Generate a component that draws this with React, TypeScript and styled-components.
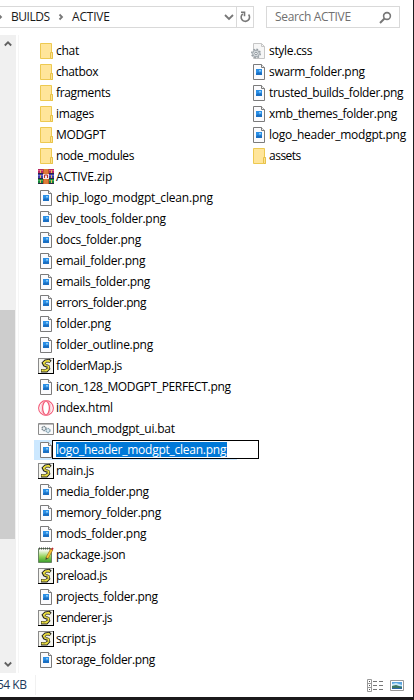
import React from "react";
import styled, { createGlobalStyle } from "styled-components";

const GlobalStyle = createGlobalStyle`
  * { box-sizing: border-box; }
  body { margin: 0; background: #fff; overflow: hidden; }
`;

const Window = styled.main`
  display: flex;
  flex-direction: column;
  width: 414px;
  height: 700px;
  background: #fff;
  border-right: 1px solid #1d1c1f;
  border-bottom: 3px solid #1b191b;
  font-family: "Open Sans", "Noto Sans", sans-serif;
  font-size: 12px;
  line-height: 20px;
  color: #000;
`;

const Toolbar = styled.header`
  display: flex;
  gap: 12px;
  height: 35px;
  padding-top: 6px;
`;

const AddressBar = styled.div`
  display: flex;
  width: 254px;
  height: 22px;
  border: 1px solid #d9d9d9;
  border-left: 0;
  color: #1a1a1a;
`;

const Crumbs = styled.div`
  display: flex;
  flex: 1;
  align-items: center;
`;

const Crumb = styled.span<{ $width: number; $track: number }>`
  width: ${(p) => p.$width}px;
  letter-spacing: ${(p) => p.$track}px;
  white-space: nowrap;
`;

const BarButton = styled.span<{ $width: number; $divided?: boolean }>`
  display: flex;
  align-items: center;
  justify-content: center;
  width: ${(p) => p.$width}px;
  border-left: ${(p) => (p.$divided ? "1px solid #d9d9d9" : "0")};
`;

const SearchBox = styled.div`
  display: flex;
  align-items: center;
  justify-content: space-between;
  width: 134px;
  height: 22px;
  padding: 0 7px 0 8px;
  border: 1px solid #d9d9d9;
  color: #707070;
  letter-spacing: -0.33px;
`;

const Body = styled.div`
  display: flex;
  height: 638px;
`;

const Scrollbar = styled.aside`
  display: flex;
  flex-direction: column;
  width: 16px;
  background: #f0f0f0;
`;

const ScrollArrow = styled.span`
  display: flex;
  align-items: center;
  justify-content: center;
  width: 15px;
  height: 18px;
  &:last-child { margin-top: auto; }
`;

const Thumb = styled.div`
  width: 15px;
  height: 229px;
  margin-top: 257px;
  background: #cdcdcd;
`;

const Files = styled.section`
  display: flex;
  margin-left: 2px;
  padding-top: 5px;
  border-left: 1px solid #f5f5f5;
`;

const Column = styled.ul<{ $width: number; $indent: number }>`
  width: ${(p) => p.$width}px;
  margin: 0;
  padding: 0 0 0 ${(p) => p.$indent}px;
  list-style: none;
`;

const Row = styled.li`
  display: flex;
  align-items: flex-start;
  gap: 2px;
  height: 21px;
  padding: 3px 0 0 4px;
`;

const SelectedRow = styled(Row)`
  gap: 0;
  width: 203px;
  height: 20px;
  margin-top: 1px;
  padding-top: 0;
  background: #cce8ff;
`;

const Name = styled.span<{ $track: number }>`
  margin-top: -2px;
  white-space: nowrap;
  letter-spacing: ${(p) => p.$track}px;
`;

const IconSlot = styled.span<{ $drop?: number }>`
  display: flex;
  flex: none;
  width: 16px;
  height: 16px;
  margin-top: ${(p) => p.$drop ?? 0}px;
`;

const RenameBox = styled.span`
  flex: none;
  width: 207px;
  height: 19px;
  margin-left: -2px;
  padding: 1px 3px;
  border: 1px solid #000;
  background: #fff;
`;

const Highlight = styled.span<{ $track: number }>`
  display: block;
  width: 171px;
  height: 15px;
  background: #0078d7;
  color: #fff;
  line-height: 16px;
  white-space: nowrap;
  letter-spacing: ${(p) => p.$track}px;
`;

const StatusBar = styled.footer`
  display: flex;
  align-items: center;
  justify-content: space-between;
  height: 24px;
  padding-right: 9px;
  color: #1e395b;
`;

const Size = styled.span`
  width: 36px;
  height: 20px;
  border-right: 1px solid #f1f1f1;
  line-height: 20px;
  white-space: nowrap;
  letter-spacing: -0.5px;
  text-indent: -3px;
`;

const Views = styled.div`
  display: flex;
  align-items: center;
  gap: 7px;
`;

type Kind = "folder" | "png" | "js" | "zip" | "html" | "bat" | "json" | "css";

const FolderIcon = () => (
  <svg width="16" height="16" viewBox="0 0 16 16">
    <path d="M2.5.5h11v9h1v6h-12z" fill="#ffe59a" stroke="#edc951" />
    <path d="M12.5 15V9.5h2v6h-2" fill="#ffe391" stroke="#e7c24a" />
  </svg>
);

const PngIcon = () => (
  <svg width="16" height="16" viewBox="0 0 16 16">
    <path d="M2.5.5h8l3 3v12h-11z" fill="#fbfbfd" stroke="#7b7b7b" />
    <path d="M10.5.5v3h3" fill="#eee" stroke="#7b7b7b" />
    <path d="M5 5h6v6H5z" fill="#2b8fe6" />
    <path d="M5 11V9.5L7 8l1.5 1L10 8l1 1v2z" fill="#1b6fc2" />
    <path d="M8 6h2v1.5H8z" fill="#8bcdf8" />
  </svg>
);

const JsIcon = () => (
  <svg width="16" height="16" viewBox="0 0 16 16">
    <path d="M0 0h16v16H0z" fill="#8a8a8a" />
    <path d="M1 1h14v14H1z" fill="#f5f5ef" />
    <path d="M15 0h1v16H0v-1h15z" fill="#000" />
    <path d="M12.5 4L11 2.5 7.5 3 5.5 5l1 2 3.5 1.5.5 2-2 2.2H3" fill="none" stroke="#222" strokeWidth="3.4" />
    <path d="M12 3.8L10.5 2.8 7.5 3.3 5.8 5l1 1.7 3.5 1.6.2 2.2-2 2H3.5" fill="none" stroke="#f1e43c" strokeWidth="1.8" />
    <path d="M8 4h3M6 6h2M8 8h2M8.5 10.5h2M5 12h2" stroke="#666" strokeWidth=".6" />
  </svg>
);

const ZipIcon = () => (
  <svg width="16" height="16" viewBox="0 0 16 16">
    <path d="M0 0h16v5H0z" fill="#b92861" />
    <path d="M0 1h16v1H0z" fill="#df5b8b" />
    <path d="M0 5h16v5H0z" fill="#3c3da5" />
    <path d="M0 6h16v1H0z" fill="#6669cd" />
    <path d="M0 10h16v5H0z" fill="#15843a" />
    <path d="M0 11h16v1H0z" fill="#42ad5b" />
    <path d="M0 4h16v1H0zM0 9h16v1H0zM0 14h16v1H0z" fill="#292344" />
    <path d="M2 1h1v3H2zM2 6h1v3H2zM2 11h1v3H2zM13 1h1v3h-1zM13 6h1v3h-1zM13 11h1v3h-1z" fill="#e4b85a" />
    <path d="M5 0h6v15H5z" fill="#b9572c" />
    <path d="M6 0h4v15H6z" fill="#de7c37" />
    <path d="M5 5h6v5H5z" fill="#f4e9e2" />
    <path d="M6.5 9V6h3v3" fill="none" stroke="#b92e2d" />
  </svg>
);

const HtmlIcon = () => (
  <svg width="16" height="16" viewBox="0 0 16 16" fill="none" stroke="#f35b78">
    <circle cx="8" cy="8" r="7.4" strokeWidth="1.1" />
    <ellipse cx="8" cy="8" rx="3.4" ry="6.9" strokeWidth="1.3" />
    <ellipse cx="8" cy="8" rx="5" ry="7.2" strokeWidth=".7" stroke="#f7a1b0" />
  </svg>
);

const BatIcon = () => (
  <svg width="16" height="16" viewBox="0 0 16 16">
    <path d="M.5 2.5h15v11H.5z" fill="#fafafa" stroke="#8b8b8b" />
    <path d="M1 3.5h14" stroke="#b9b9b9" />
    <circle cx="6" cy="7.5" r="2" fill="#e9eef1" stroke="#78868e" strokeWidth="1.3" strokeDasharray="1.5 .5" />
    <circle cx="10" cy="9.5" r="2" fill="#dcecf4" stroke="#8ba6b4" strokeWidth="1.3" strokeDasharray="1.5 .5" />
  </svg>
);

const JsonIcon = () => (
  <svg width="16" height="16" viewBox="0 0 16 16">
    <defs>
      <linearGradient id="pad" x2="0" y2="1">
        <stop offset=".15" stopColor="#f1f7e9" />
        <stop offset=".6" stopColor="#8fd156" />
        <stop offset="1" stopColor="#379b2d" />
      </linearGradient>
    </defs>
    <path d="M.5 1.5h13v14H.5z" fill="url(#pad)" stroke="#688562" />
    <path d="M1 1.5h12" stroke="#4d4d4d" strokeWidth="2" strokeDasharray="1 1" />
    <path d="M14 2L9 11" stroke="#9b6d20" strokeWidth="3" />
    <path d="M14 2L9 11" stroke="#f4c336" strokeWidth="1.8" />
    <path d="M13 2.5L14.3.5l1.3.8-1.3 2z" fill="#bd263b" />
    <path d="M7.8 10.3L7.5 13l2.6-1.5z" fill="#4c4631" />
  </svg>
);

const CssIcon = () => (
  <svg width="16" height="16" viewBox="0 0 16 16">
    <path d="M2.5.5h8l3 3v12h-11z" fill="#f6f6f6" stroke="#c6c6c6" />
    <path d="M10.5.5v3h3" fill="none" stroke="#c6c6c6" />
    <circle cx="5" cy="10.5" r="4.3" fill="#dce1e4" stroke="#939ba1" strokeWidth="1.4" strokeDasharray="1.7 1.67" />
    <circle cx="5" cy="10.5" r="3.3" fill="#dce1e4" stroke="#a0a7ac" />
    <circle cx="5" cy="10.5" r="1.3" fill="#fff" stroke="#8d969c" />
  </svg>
);

const icons: Record<Kind, () => React.JSX.Element> = {
  folder: FolderIcon,
  png: PngIcon,
  js: JsIcon,
  zip: ZipIcon,
  html: HtmlIcon,
  bat: BatIcon,
  json: JsonIcon,
  css: CssIcon,
};

type Entry = { name: string; kind: Kind; track?: number; renaming?: boolean };

const mainEntries: Entry[] = [
  { name: "chat", kind: "folder", track: -0.25 },
  { name: "chatbox", kind: "folder", track: -0.4 },
  { name: "fragments", kind: "folder", track: -0.33 },
  { name: "images", kind: "folder", track: -0.33 },
  { name: "MODGPT", kind: "folder", track: -0.33 },
  { name: "node_modules", kind: "folder", track: -0.36 },
  { name: "ACTIVE.zip", kind: "zip", track: -0.2 },
  { name: "chip_logo_modgpt_clean.png", kind: "png", track: -0.16 },
  { name: "dev_tools_folder.png", kind: "png", track: -0.3 },
  { name: "docs_folder.png", kind: "png", track: -0.27 },
  { name: "email_folder.png", kind: "png", track: -0.27 },
  { name: "emails_folder.png", kind: "png", track: -0.3 },
  { name: "errors_folder.png", kind: "png", track: -0.42 },
  { name: "folder.png", kind: "png", track: -0.3 },
  { name: "folder_outline.png", kind: "png", track: -0.28 },
  { name: "folderMap.js", kind: "js", track: -0.33 },
  { name: "icon_128_MODGPT_PERFECT.png", kind: "png", track: -0.34 },
  { name: "index.html", kind: "html", track: -0.3 },
  { name: "launch_modgpt_ui.bat", kind: "bat", track: -0.25 },
  { name: "logo_header_modgpt_clean.png", kind: "png", track: -0.25, renaming: true },
  { name: "main.js", kind: "js", track: -0.3 },
  { name: "media_folder.png", kind: "png", track: -0.31 },
  { name: "memory_folder.png", kind: "png", track: -0.3 },
  { name: "mods_folder.png", kind: "png", track: -0.27 },
  { name: "package.json", kind: "json", track: -0.25 },
  { name: "preload.js", kind: "js", track: -0.4 },
  { name: "projects_folder.png", kind: "png", track: -0.32 },
  { name: "renderer.js", kind: "js", track: -0.5 },
  { name: "script.js", kind: "js", track: -0.33 },
  { name: "storage_folder.png", kind: "png", track: -0.33 },
];

const sideEntries: Entry[] = [
  { name: "style.css", kind: "css", track: -0.33 },
  { name: "swarm_folder.png", kind: "png", track: -0.31 },
  { name: "trusted_builds_folder.png", kind: "png", track: -0.34 },
  { name: "xmb_themes_folder.png", kind: "png", track: -0.33 },
  { name: "logo_header_modgpt.png", kind: "png", track: -0.25 },
  { name: "assets", kind: "folder", track: -0.5 },
];

const FileRow = ({ name, kind, track = 0, renaming }: Entry) => {
  const Icon = icons[kind];
  if (renaming) {
    return (
      <SelectedRow>
        <IconSlot $drop={2}>
          <Icon />
        </IconSlot>
        <RenameBox>
          <Highlight $track={track}>{name}</Highlight>
        </RenameBox>
      </SelectedRow>
    );
  }
  return (
    <Row>
      <IconSlot>
        <Icon />
      </IconSlot>
      <Name $track={track}>{name}</Name>
    </Row>
  );
};

const Chevron = ({ d, w = 8, h = 8, color = "#606060" }: { d: string; w?: number; h?: number; color?: string }) => (
  <svg width={w} height={h} viewBox={`0 0 ${w} ${h}`} fill="none" stroke={color} strokeWidth="1.8">
    <path d={d} />
  </svg>
);

export default function App() {
  return (
    <>
      <GlobalStyle />
      <Window>
        <Toolbar>
          <AddressBar>
            <Crumbs>
              <Crumb $width={11} $track={0}>
                <Chevron d="M-2 1L1 4l-3 3" color="#777" />
              </Crumb>
              <Crumb $width={47} $track={-0.45}>BUILDS</Crumb>
              <Crumb $width={14} $track={0}>
                <Chevron d="M1.5 1.5L4 4 1.5 6.5" color="#777" />
              </Crumb>
              <Crumb $width={50} $track={-0.2}>ACTIVE</Crumb>
            </Crumbs>
            <BarButton $width={15}>
              <Chevron w={10} h={8} d="M1 2l4 4 4-4" color="#777" />
            </BarButton>
            <BarButton $width={17} $divided>
              <svg width="11" height="12" viewBox="0 0 11 12" fill="none" stroke="#777" strokeWidth="1.6">
                <path d="M2.8 2.8A4.2 4.2 0 1 0 8.6 3.5" />
                <path d="M1 1.2h3.5v4" />
              </svg>
            </BarButton>
          </AddressBar>
          <SearchBox>
            Search ACTIVE
            <svg width="13" height="13" viewBox="0 0 13 13" fill="none" stroke="#777" strokeWidth="1.6">
              <circle cx="8" cy="5" r="3.4" />
              <path d="M5.5 7.5L1 12" strokeWidth="2" />
            </svg>
          </SearchBox>
        </Toolbar>
        <Body>
          <Scrollbar>
            <ScrollArrow>
              <Chevron d="M.8 5.5L4 2.3l3.2 3.2" />
            </ScrollArrow>
            <Thumb />
            <ScrollArrow>
              <Chevron d="M.8 2.5L4 5.7l3.2-3.2" />
            </ScrollArrow>
          </Scrollbar>
          <Files>
            <Column $width={228} $indent={15}>
              {mainEntries.map((entry) => (
                <FileRow key={entry.name} {...entry} />
              ))}
            </Column>
            <Column $width={160} $indent={0}>
              {sideEntries.map((entry) => (
                <FileRow key={entry.name} {...entry} />
              ))}
            </Column>
          </Files>
        </Body>
        <StatusBar>
          <Size>54 KB</Size>
          <Views>
            <svg width="16" height="13" viewBox="0 0 16 13" fill="none" stroke="#999">
              <path d="M.5.5h4v12h-4zM.5 4.5h4M.5 8.5h4" />
              <path d="M6 2.5h4M12 2.5h4M6 6.5h4M12 6.5h4M6 10.5h4M12 10.5h4" stroke="#777" />
              <path d="M2 2.5h1M2 6.5h1M2 10.5h1" stroke="#555" />
            </svg>
            <svg width="14" height="11" viewBox="0 0 14 11">
              <path d="M.5.5h13v10H.5z" fill="#fff" stroke="#999" />
              <path d="M2 2h10v7H2z" fill="#5aa5e0" />
              <path d="M2 4l4-1 6 2v1H2z" fill="#c9e6f5" />
              <path d="M2 6l4-1 6 2v2H2z" fill="#3c7560" />
              <path d="M2 8h10v1H2z" fill="#2c66a7" />
            </svg>
          </Views>
        </StatusBar>
      </Window>
    </>
  );
}
